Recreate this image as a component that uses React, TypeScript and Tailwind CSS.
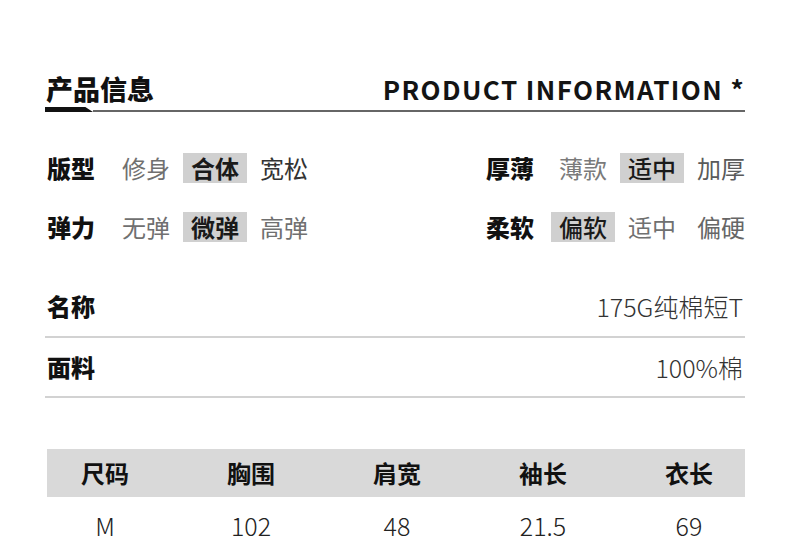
import React from "react";

const cjk = { fontFamily: '"Noto Sans CJK SC", "Noto Sans", sans-serif' };

type Opt = { t: string; on?: boolean; c?: string; w?: string };

function Group({ label, opts, gap }: { label: string; opts: Opt[]; gap: string }) {
  return (
    <div className="flex items-center h-[40px]">
      <span className={`text-[24px] font-black text-[#111] leading-none w-[48px] whitespace-nowrap ${gap}`}>{label}</span>
      <div className="flex gap-[5px]">
        {opts.map((o, i) => (
          <span
            key={i}
            className={`w-[64px] h-[30px] flex items-center justify-center text-[24px] leading-none whitespace-nowrap ${
              o.on ? "bg-[#d0d0d0] text-[#1a1a1a]" : "font-normal"
            } ${o.w ?? ""}`}
            style={o.on ? undefined : { color: o.c ?? "#5a5a5a" }}
          >
            {o.t}
          </span>
        ))}
      </div>
    </div>
  );
}

export default function App() {
  const cols = ["尺码", "胸围", "肩宽", "袖长", "衣长"];
  const vals = ["M", "102", "48", "21.5", "69"];
  return (
    <div className="w-[790px] h-[548px] bg-white overflow-hidden" style={cjk}>
      <div className="ml-[45px] w-[700px] flex flex-col">
        <div className="mt-[70px] h-[37px] flex items-center justify-between">
          <span className="text-[27px] font-black text-[#111] leading-none ml-[1px]">产品信息</span>
          <span className="text-[26px] font-bold text-[#141414] leading-none tracking-[1.4px]">
            PRODUCT INFORMATION *
          </span>
        </div>
        <div className="flex items-end h-[5px]">
          <div
            className="w-[48px] h-[5px] bg-[#111]"
            style={{ clipPath: "polygon(0 0, 84% 0, 100% 100%, 0 100%)" }}
          />
          <div className="flex-1 h-[2px] bg-[#666]" />
        </div>

        <div className="grid grid-cols-[439px_1fr] mt-[36px] pl-[2px]">
          <Group
            label="版型"
            gap="mr-[19px]"
            opts={[{ t: "修身", c: "#707070" }, { t: "合体", on: true, w: "font-bold" }, { t: "宽松", c: "#333" }]}
          />
          <Group
            label="厚薄"
            gap="mr-[17px]"
            opts={[{ t: "薄款", c: "#7a7a7a" }, { t: "适中", on: true, w: "font-medium" }, { t: "加厚", c: "#5a5a5a" }]}
          />
        </div>
        <div className="grid grid-cols-[439px_1fr] mt-[19px] pl-[2px]">
          <Group
            label="弹力"
            gap="mr-[19px]"
            opts={[{ t: "无弹", c: "#707070" }, { t: "微弹", on: true, w: "font-bold" }, { t: "高弹", c: "#707070" }]}
          />
          <Group
            label="柔软"
            gap="mr-[17px]"
            opts={[{ t: "偏软", on: true, w: "font-medium" }, { t: "适中", c: "#707070" }, { t: "偏硬", c: "#666" }]}
          />
        </div>

        <div className="mt-[29px] h-[60px] flex items-center justify-between pl-[2px] pr-[2px]">
          <span className="text-[24px] font-black text-[#111] leading-none">名称</span>
          <span className="text-[25px] font-light text-[#333] leading-none">175G纯棉短T</span>
        </div>
        <div className="h-[2px] bg-[#d2d2d2]" />
        <div className="h-[58px] flex items-center justify-between pl-[2px] pr-[2px]">
          <span className="text-[24px] font-black text-[#111] leading-none">面料</span>
          <span className="text-[25px] font-light text-[#333] leading-none">100%棉</span>
        </div>
        <div className="h-[2px] bg-[#d2d2d2]" />

        <div className="mt-[51px] ml-[2px] h-[48px] bg-[#d9d9d9] flex items-center">
          <div className="flex ml-[-15px]">
            {cols.map((c) => (
              <span key={c} className="w-[146px] text-center text-[24px] font-bold text-[#111] leading-none">
                {c}
              </span>
            ))}
          </div>
        </div>
        <div className="h-[56px] flex items-center">
          <div className="flex ml-[-13px]">
            {vals.map((v) => (
              <span key={v} className="w-[146px] text-center text-[25px] font-light text-[#222] leading-none">
                {v}
              </span>
            ))}
          </div>
        </div>
      </div>
    </div>
  );
}
